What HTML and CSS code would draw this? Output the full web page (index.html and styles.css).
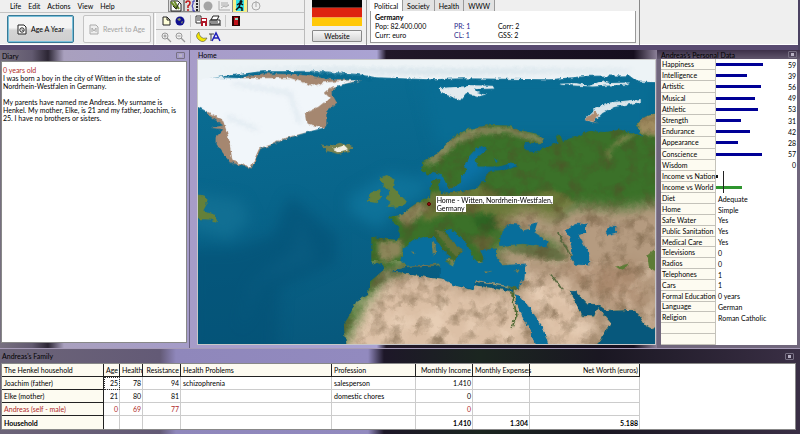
FILE: index.html
```html
<!DOCTYPE html>
<html lang="en">
<head>
<meta charset="utf-8">
<title>Andreas Henkel</title>
<link rel="stylesheet" href="styles.css">
</head>
<body>
<header class="top">
  <div class="left">
    <nav class="menu">
      <button>Life</button><button>Edit</button><button>Actions</button><button>View</button><button>Help</button>
      <span class="icons first">
        <button class="ico on" aria-label="Diary"><svg viewBox="0 0 14 12"><path d="M2 1h7l3 3v7H2z" fill="#fff" stroke="#222"/><path d="M2 2l6 7M5 1l5 8" stroke="#6c8a2c" stroke-width="2"/><path d="M4 6l3 3 3-6" stroke="#222" fill="none"/></svg></button>
        <button class="ico on" aria-label="Help list"><svg viewBox="0 0 14 12"><path d="M1 3q0-2 2-2t2 2-2 3v2M3 9v2" stroke="#c01818" stroke-width="1.500" fill="none"/><path d="M10 1H8v3L7 6l1 2v3h2" stroke="#2222b0" fill="none"/><path d="M12 0v12" stroke="#222" stroke-width="2" stroke-dasharray="2 1"/></svg></button>
        <button class="ico" aria-label="Stop"><svg viewBox="0 0 14 12"><circle cx="7" cy="6" r="4.500" fill="#a4a4a4"/></svg></button>
        <button class="ico" aria-label="Charts"><svg viewBox="0 0 14 12"><path d="M2 1v9h11M4 3h7M4 5h8M4 8l3-2 2 1 3-2" stroke="#aaa" fill="none"/></svg></button>
        <button class="ico on" aria-label="Activities"><svg viewBox="0 0 14 12"><path d="M0 0h14v12H0z" fill="#f6f08a"/><path d="M3 0h8v11H3z" fill="#31e0e8"/><circle cx="8" cy="1.500" r="1.500" fill="#111"/><path d="M7.500 3L6 7l3 1v3M6 7l-3 3M4 5l3-2 3 2" stroke="#111" stroke-width="1.500" fill="none"/></svg></button>
        <button class="ico" aria-label="Clock"><svg viewBox="0 0 14 12"><circle cx="7" cy="6" r="4" fill="none" stroke="#aaa"/><path d="M7 1v6" stroke="#aaa"/></svg></button>
      </span>
    </nav>
    <div class="tools">
      <div class="age">
        <button class="big focus"><svg viewBox="0 0 10 11"><path d="M1 1h6l2 2v7H1z" fill="#fff" stroke="#222"/><circle cx="5" cy="6" r="2.200" fill="none" stroke="#222"/><path d="M5 5v1.500h1.500" stroke="#222" stroke-width=".6" fill="none"/></svg>Age A Year</button>
        <button class="big off" disabled><svg viewBox="0 0 10 11"><path d="M1 1h6l2 2v7H1z" fill="#eee" stroke="#aaa"/><path d="M3 8V4l2 3 2-3v4" fill="none" stroke="#aaa"/></svg>Revert to Age</button>
      </div>
      <div class="bars">
        <div class="icons">
          <button class="ico" aria-label="New"><svg viewBox="0 0 14 12"><path d="M4 2h4l3 3v5H4z" fill="#ffffd8" stroke="#222"/><path d="M8 2v3h3" fill="none" stroke="#222"/></svg></button>
          <button class="ico" aria-label="World"><svg viewBox="0 0 14 12"><circle cx="7" cy="6" r="4.500" fill="#101090"/><path d="M4 4l3-1 1 2-2 1zM8 7l2-1-1 3z" fill="#8c9a60"/></svg></button>
          <i></i>
          <button class="ico" aria-label="Save"><svg viewBox="0 0 14 12"><path d="M2 1h5v7H2z" fill="#fff" stroke="#333"/><path d="M3 3h3M3 5h3" stroke="#333"/><path d="M7 3h6v8H7z" fill="#b01828"/><path d="M9 8h2v3H9zM8 4h4v2H8z" fill="#fff"/></svg></button>
          <button class="ico" aria-label="Print"><svg viewBox="0 0 14 12"><path d="M5 1h6L9 5H3zM2 5h10v4H2z" fill="#fff" stroke="#222"/><path d="M1 10h12M3 7h7" stroke="#222"/></svg></button>
          <i></i>
          <button class="ico" aria-label="Exit"><svg viewBox="0 0 14 12"><path d="M3 1h8v10H3z" fill="#2a0505"/><path d="M5 2h4v8H5z" fill="#c01018"/><path d="M6 3h3v2H6z" fill="#9ad8c0"/></svg></button>
        </div>
        <div class="icons">
          <button class="ico" aria-label="Zoom in"><svg viewBox="0 0 14 12"><circle cx="6" cy="5" r="3" fill="none" stroke="#999"/><path d="M4.500 5h3M6 3.500v3M8 7l4 4" stroke="#999" stroke-width="1.200"/></svg></button>
          <button class="ico" aria-label="Zoom out"><svg viewBox="0 0 14 12"><circle cx="6" cy="5" r="3" fill="none" stroke="#999"/><path d="M4.500 5h3M8 7l4 4" stroke="#999" stroke-width="1.200"/></svg></button>
          <i></i>
          <button class="ico" aria-label="Night"><svg viewBox="0 0 14 12"><path d="M5 1q-5 4 0 8t8-2q-4 1-6-1T5 1" fill="#f2e600" stroke="#554" stroke-width=".6"/></svg></button>
          <button class="ico" aria-label="Font"><svg viewBox="0 0 14 12"><path d="M1 3h5M3 3v7" stroke="#444" fill="none"/><path d="M4 10L8 2l4 8M6 7h5" stroke="#2020b8" stroke-width="1.500" fill="none"/></svg></button>
        </div>
      </div>
    </div>
  </div>
  <div class="country">
    <svg class="flag" viewBox="0 0 49 27" preserveAspectRatio="none" role="img" aria-label="Flag of Germany"><path d="M0 0h49v8H0z" fill="#000"/><path d="M0 8h49v10H0z" fill="#de2410"/><path d="M0 18h49v9H0z" fill="#ffc808"/></svg>
    <button class="web">Website</button>
  </div>
  <section class="info">
    <div class="tabs" role="tablist"><button role="tab" class="sel">Political</button><button role="tab">Society</button><button role="tab">Health</button><button role="tab">WWW</button></div>
    <div class="facts">
      <b>Germany</b><span></span><span></span>
      <span>Pop: 82.400.000</span><a href="#pr">PR: 1</a><span>Corr: 2</span>
      <span>Curr: euro</span><a href="#cl">CL: 1</a><span>GSS: 2</span>
    </div>
  </section>
</header>

<main class="mid">
  <section class="win diary">
    <h2>Diary<button class="x" aria-label="Close diary"></button></h2>
    <div class="pane text">
      <p class="red">0 years old</p>
      <p>I was born a boy in the city of Witten in the state of Nordrhein-Westfalen in Germany.</p>
      <p class="gap">My parents have named me Andreas. My surname is Henkel. My mother, Elke, is 21 and my father, Joachim, is 25. I have no brothers or sisters.</p>
    </div>
  </section>

  <section class="win home">
    <h2>Home</h2>
    <div class="pane map">
      <svg viewBox="24 30 1374 858" preserveAspectRatio="none" role="img" aria-label="Map of Europe">
        <defs>
          <filter id="rough" filterUnits="userSpaceOnUse" x="-40" y="-40" width="1500" height="1000" color-interpolation-filters="sRGB"><feTurbulence type="fractalNoise" baseFrequency=".07" numOctaves="2" seed="4"/><feDisplacementMap in="SourceGraphic" scale="13" xChannelSelector="R" yChannelSelector="G"/></filter>
          <filter id="blur" x="-20%" y="-20%" width="140%" height="140%" color-interpolation-filters="sRGB"><feGaussianBlur stdDeviation="20"/></filter>
          <filter id="soft" x="-20%" y="-20%" width="140%" height="140%" color-interpolation-filters="sRGB"><feGaussianBlur stdDeviation="7"/></filter>
          <filter id="grain" x="0" y="0" width="100%" height="100%" color-interpolation-filters="sRGB"><feTurbulence type="fractalNoise" baseFrequency=".022" numOctaves="5" seed="9"/><feColorMatrix values="0 0 0 0 .35  0 0 0 0 .27  0 0 0 0 .16  1.800 1.200 0 0 -1.400"/></filter>
          <filter id="light" x="0" y="0" width="100%" height="100%" color-interpolation-filters="sRGB"><feTurbulence type="fractalNoise" baseFrequency=".014" numOctaves="4" seed="21"/><feColorMatrix values="0 0 0 0 .95  0 0 0 0 .86  0 0 0 0 .77  2 1 0 0 -1.250"/></filter>
          <clipPath id="land"><path d="M545 565L620 573L632 555L625 530L595 505L640 497L655 480L700 450L722 443L725 395L750 390L745 415L755 432L800 428L862 420L875 400L890 398L888 375L905 365L945 362L985 352L970 340L930 352L865 352L858 330L875 315L895 298L880 288L862 295L838 322L826 345L832 365L815 380L815 400L785 418L773 410L757 375L730 368L715 380L698 365L697 338L745 312L770 285L800 255L840 238L900 226L955 228L985 240L1040 252L1068 268L1060 282L1005 280L1010 305L1045 310L1060 295L1105 280L1100 258L1115 260L1120 275L1160 262L1200 245L1250 248L1290 240L1345 252L1360 262L1340 225L1360 205L1398 192H1450V830L1385 840L1368 830L1350 800L1335 785L1255 788L1225 768L1195 765L1160 728L1140 727L1165 775L1175 803L1215 805L1225 778L1265 825L1225 888V930H1085L1068 860L1010 770L980 745L975 730L965 718L870 702L850 705L850 725L800 712L760 690L750 650L650 655L605 668L582 665L576 642L570 650L545 640ZM582 665L540 700L535 740L500 760L480 800L462 830L470 888V930H1055L1040 888L1010 820L980 760L975 730Z"/></clipPath>
          <linearGradient id="sea" x2=".2" y2="1"><stop stop-color="#0b7096"/><stop offset=".5" stop-color="#08658b"/><stop offset="1" stop-color="#07587c"/></linearGradient>
        </defs>
        <path d="M0 0H1440V920H0z" fill="url(#sea)"/>
        <g filter="url(#blur)">
          <path d="M0 430L150 450L180 510L120 570L0 540z" fill="#116f93"/>
          <path d="M480 440L600 370L700 390L720 430L600 500L570 540L480 490z" fill="#0e7299"/>
          <path d="M330 490L380 640L210 700L150 850L190 700L310 600z" fill="#126c91"/>
          <path d="M0 600L130 600L250 560L300 440L440 560L440 640L270 720L260 930H0z" fill="#045075" opacity=".6"/>
          <path d="M690 80H1398V260H900L740 290z" fill="#096d94"/>
          <path d="M700 380L850 280L920 340L800 430z" fill="#0c73a6"/>
        </g>
        <g filter="url(#rough)">
          <path d="M0 88L150 85L205 70L330 73L420 88L515 92L440 108L425 130L442 160L410 185L410 230L290 268L240 290L212 298L185 358L120 340L80 285L80 260L100 240L65 235L100 228L60 200L45 180L0 160z" fill="#a58770"/>
          <path d="M0 80L150 85L300 84L370 108L400 98L515 90L425 112L405 130L420 145L385 172L345 190L350 222L402 235L290 265L240 287L208 297L182 354L128 335L115 260L100 215L60 190L0 160z" fill="#f1f6fa"/>
          <path d="M130 100L300 130L330 220M110 200L200 240" stroke="#dbe6ee" stroke-width="8" fill="none" filter="url(#soft)"/>
          <path d="M0 0H1440V98L1345 95L1320 76L1200 78L1080 88L820 85L720 88L560 82L500 72L380 62L200 66L0 92z" fill="#edf3f6"/>
          <path d="M90 60L370 52L1330 58L1310 66L700 76L340 62z" fill="#cfdfe7" opacity=".6" filter="url(#soft)"/>
          <path d="M170 72L220 64L330 66L430 74L560 84L540 92L480 88L400 80L300 72L220 70L190 78z" fill="#086a90"/>
          <path d="M392 285L420 290L450 280L490 290L480 305L445 314L410 305z" fill="#75804f"/>
          <path d="M430 298L465 288L475 300L445 308z" fill="#f1eee3"/>
          <path d="M0 432L48 440L50 465L40 485L75 495L82 520L60 512L0 510zM570 385L592 378L615 390L610 415L635 440L652 458L635 472L590 474L605 460L590 450L602 430L585 415zM540 432L572 420L575 445L560 462L535 458z" fill="#64803a"/>
          <path d="M750 115L850 108L860 125L890 135L870 140L830 130L812 152L790 142L755 130zM835 106L910 108L915 116L860 118zM1112 102L1160 100L1200 108L1240 92L1260 100L1320 98L1310 104L1210 110L1120 105z" fill="#e2eaee"/>
          <path d="M1185 210L1220 175L1265 158L1355 148L1355 157L1275 172L1240 190L1212 218z" fill="#d9e5ea"/>
          <path d="M1185 210L1215 185L1230 195L1215 215L1230 222z" fill="#b08c70"/>
          <g clip-path="url(#land)">
            <path d="M440 180H1450V930H440z" fill="#3b7129"/>
            <g filter="url(#soft)">
              <path d="M700 350L760 280L850 232L960 232L1080 268L1070 285L950 250L870 255L800 285L740 340z" fill="#868a5c"/>
              <path d="M715 435L860 405L960 450L1090 420L1160 460L1090 520L920 540L880 490L770 495L700 520z" fill="#6a7939"/>
              <path d="M620 500L690 455L720 480L650 535zM565 580L640 575L635 620L590 640L565 625z" fill="#8c865a"/>
              <path d="M735 540L830 600L800 620zM840 570L920 560L885 620z" fill="#636f38"/>
              <path d="M1300 260L1345 250L1265 300L1260 340L1250 310z" fill="#878752"/>
              <path d="M1330 190H1450V270L1350 250z" fill="#a08c60"/>
              <path d="M850 510L910 490L925 540L880 550z" fill="#2e6323"/>
            </g>
            <g filter="url(#blur)">
              <path d="M1480 450L1300 480L1160 470L1090 515L1020 480L930 520L960 545L1100 580L1130 620L930 590L910 640L980 670L985 710L700 640L590 675L430 940H1480z" fill="#b59b80"/>
              <path d="M540 740L700 690L840 735L960 725L1040 940H440zM990 690L1130 700L1200 820L1200 940H1080z" fill="#dcc0a6"/>
              <path d="M1080 620L1180 660L1340 640L1370 780L1270 775L1160 700z" fill="#aa8a6e"/>
            </g>
            <path d="M575 665L720 645L755 655L700 662L600 690L550 720L560 690zM950 600L1080 590L1140 625L1110 640L980 610z" fill="#667044" filter="url(#soft)"/>
            <path d="M440 640H1450V930H440z" filter="url(#light)" opacity=".5"/>
            <path d="M440 180H1450V930H440z" filter="url(#grain)" opacity=".5"/>
            <path d="M955 714L992 714L975 730L974 760L985 800L970 840L966 838L978 800L967 745z" fill="#4c6830"/>
            <path d="M1280 655L1320 645L1300 667zM1375 620L1398 600V670L1380 660z" fill="#5d7c36"/>
            <path d="M1085 675l20 30 15 20M1105 550l50 90" stroke="#55683c" stroke-width="5" fill="none"/>
          </g>
          <g fill="#086e9b">
            <path d="M935 550L960 525L990 528L1000 545L1020 540L1018 528L1045 520L1035 550L1075 578L1072 597L1000 585L930 592z"/>
            <path d="M1130 540L1160 525L1192 525L1190 550L1168 560L1185 590L1200 610L1200 650L1160 648L1145 630L1150 590z"/>
            <path d="M1250 545L1262 530L1282 532L1280 555L1255 562z"/>
            <path d="M640 600L668 575L705 565L735 565L760 605L785 625L770 640L790 650L800 630L820 605L790 580L765 545L785 540L830 580L850 625L870 645L885 630L875 605L920 600L920 625L940 650L1010 645L1005 690L985 718L860 695L850 722L800 712L750 688L752 645L650 652L635 635z"/>
            <path d="M955 338l25 5-20 15zM915 325l12 8-8 10z"/>
            <path d="M976 738L990 742L1022 780L1060 835L1080 900L1040 900L1020 840L992 790z"/>
          </g>
          <path d="M730 620L727 580L738 585L740 612zM770 630L797 635L790 645zM972 668L992 662L985 673zM880 665L910 668L890 672zM665 608l12 3-5 5z" fill="#7c8050"/>
          <path d="M735 543L760 548L785 580L825 605L810 610L800 625L780 600z" fill="#607037"/>
        </g>
      </svg>
      <span class="pin"></span>
      <span class="tip"><span>Home - Witten, Nordrhein-Westfalen, Germany</span></span>
    </div>
  </section>

  <section class="win person">
    <h2>Andreas's Personal Data<button class="x" aria-label="Close personal data"></button></h2>
    <div class="pane stats">
      <table class="meters">
        <tr><th>Happiness</th><td><div><i style="width:59%"></i>59</div></td></tr>
        <tr><th>Intelligence</th><td><div><i style="width:39%"></i>39</div></td></tr>
        <tr><th>Artistic</th><td><div><i style="width:56%"></i>56</div></td></tr>
        <tr><th>Musical</th><td><div><i style="width:49%"></i>49</div></td></tr>
        <tr><th>Athletic</th><td><div><i style="width:53%"></i>53</div></td></tr>
        <tr><th>Strength</th><td><div><i style="width:31%"></i>31</div></td></tr>
        <tr><th>Endurance</th><td><div><i style="width:42%"></i>42</div></td></tr>
        <tr><th>Appearance</th><td><div><i style="width:28%"></i>28</div></td></tr>
        <tr><th>Conscience</th><td><div><i style="width:57%"></i>57</div></td></tr>
        <tr><th>Wisdom</th><td><div><i style="width:0%"></i>0</div></td></tr>
        <tr><th>Income vs Nation</th><td class="mark"><div><i class="dark" style="width:3%"></i></div></td></tr>
        <tr><th>Income vs World</th><td class="mark"><div><i class="green" style="width:32%"></i></div></td></tr>
      </table>
      <table class="details">
        <tr><th>Diet</th><td>Adequate</td></tr>
        <tr><th>Home</th><td>Simple</td></tr>
        <tr><th>Safe Water</th><td>Yes</td></tr>
        <tr><th>Public Sanitation</th><td>Yes</td></tr>
        <tr><th>Medical Care</th><td>Yes</td></tr>
        <tr><th>Televisions</th><td>0</td></tr>
        <tr><th>Radios</th><td>0</td></tr>
        <tr><th>Telephones</th><td>1</td></tr>
        <tr><th>Cars</th><td>1</td></tr>
        <tr><th>Formal Education</th><td>0 years</td></tr>
        <tr><th>Language</th><td>German</td></tr>
        <tr><th>Religion</th><td>Roman Catholic</td></tr>
        <tr><th></th><td></td></tr>
        <tr><th></th><td></td></tr>
      </table>
    </div>
  </section>
</main>

<section class="win family">
  <h2>Andreas's Family<button class="x" aria-label="Close family"></button></h2>
  <div class="pane">
    <table class="fam">
      <colgroup><col class="c1"><col class="c2"><col class="c3"><col class="c4"><col class="c5"><col class="c6"><col class="c7"><col class="c7"><col class="c8"></colgroup>
      <thead><tr><th>The Henkel household</th><th class="n">Age</th><th class="n">Health</th><th class="n">Resistance</th><th>Health Problems</th><th>Profession</th><th class="n">Monthly Income</th><th class="n">Monthly Expenses</th><th class="n">Net Worth (euros)</th></tr></thead>
      <tbody>
        <tr><th>Joachim (father)</th><td class="n cur">25</td><td class="n">78</td><td class="n">94</td><td>schizophrenia</td><td>salesperson</td><td class="n">1.410</td><td></td><td></td></tr>
        <tr><th>Elke (mother)</th><td class="n">21</td><td class="n">80</td><td class="n">81</td><td></td><td>domestic chores</td><td class="n">0</td><td></td><td></td></tr>
        <tr class="red"><th>Andreas (self - male)</th><td class="n">0</td><td class="n">69</td><td class="n">77</td><td></td><td></td><td class="n">0</td><td></td><td></td></tr>
        <tr class="total"><th>Household</th><td></td><td></td><td></td><td></td><td></td><td class="n">1.410</td><td class="n">1.304</td><td class="n">5.188</td></tr>
      </tbody>
    </table>
  </div>
</section>
</body>
</html>
```
FILE: styles.css
```css
* { box-sizing: border-box; }
body {
  margin: 0;
  min-height: 100vh;
  display: flex;
  flex-direction: column;
  font: 7px/8px Lato, Roboto, sans-serif;
  color: #000;
  background: #4b4262;
}
button { font: inherit; color: inherit; padding: 0; margin: 0; border: 0; background: none; }
h2, p { margin: 0; font-size: inherit; font-weight: normal; }
table { border-collapse: separate; border-spacing: 0; table-layout: fixed; width: 100%; }
th, td { padding: 0; font-weight: normal; text-align: left; white-space: nowrap; }
.red { color: #b02a2a; }

/* toolbar */
.top {
  display: flex;
  height: 50px;
  margin-right: 2px;
  background: #efefef;
  border-bottom: 5px solid #584a70;
  box-shadow: inset 0 -1px #fff, 0 -1px #aaa0c0;
}
.left { flex: 0 0 305px; display: flex; flex-direction: column; border-right: 1px solid #bbb; }
.menu { display: flex; height: 13px; padding-left: 10px; gap: 7px; border-bottom: 1px solid #c4c4c4; }
.menu > button { height: 12px; }
.icons { display: flex; align-items: center; }
.first { margin-left: auto; padding-right: 40px; align-items: stretch; }
.ico { width: 14px; height: 12px; display: block; }
.ico svg { display: block; width: 14px; height: 12px; }
.first .ico { width: 16px; padding: 0 1px; }
.first .on { background: #ddd; border: solid #888; border-width: 0 1px 1px; padding: 0; }
.tools { flex: 1; display: flex; }
.age { flex: 0 0 153px; display: flex; gap: 9px; padding: 2px 2px 2px 7px; border-right: 1px solid #bbb; }
.big { display: flex; align-items: center; justify-content: center; gap: 4px; border-radius: 2px; }
.big svg { width: 10px; height: 11px; }
.focus { width: 67px; border: 1px solid #387a96; box-shadow: inset 0 0 0 1px #78bfda; background: linear-gradient(#f4f4f4 45%, #d4d4d4 55%, #cfcfcf); }
.off { width: 68px; border: 1px solid #c4c4c4; background: #f5f5f5; color: #a2a2a2; }
.bars { flex: 1; display: flex; flex-direction: column; margin-left: 1px; border-left: 1px solid #fff; }
.bars .icons { flex: 1; padding-left: 3px; }
.bars .icons + .icons { border-top: 1px solid #bbb; }
.bars i { width: 1px; height: 12px; margin: 0 3px; background: #c8c8c8; }
.country { flex: 0 0 62px; display: flex; flex-direction: column; gap: 4px; padding: 0 4px 3px 7px; border-right: 1px solid #999; }
.flag { width: 100%; height: 27px; display: block; }
.web { height: 12px; border: 1px solid #888; border-radius: 1px; background: linear-gradient(#f6f6f6, #d6d6d6); }
.info { flex: 0 0 273px; display: flex; flex-direction: column; padding: 0 3px 2px; border-right: 1px solid #888; }
.tabs { display: flex; height: 11px; }
.tabs button { padding: 0 4px; background: #e2e2e2; border: solid #999; border-width: 0 1px 0 0; }
.tabs .sel { background: #fff; }
.facts {
  flex: 1;
  display: grid;
  grid-template-columns: 79px 44px 1fr;
  grid-auto-rows: 9px;
  padding: 2px 4px;
  background: #fff;
  border: solid #999;
  border-width: 0 1px 1px;
}
.facts a { color: #28288c; text-decoration: none; }

/* windows */
.mid {
  flex: 1;
  display: grid;
  grid-template-columns: 190px 1fr 143px;
  background: linear-gradient(90deg, #777080, #625a70 4%, #2c2634 6%, #a9a0be 8%, #a59cc8 22%, #aaa3d3 47%, #211828 49%, #160e1e 80%, #40354c);
}
.win { display: flex; flex-direction: column; min-width: 0; }
.win h2 { display: flex; justify-content: space-between; align-items: center; padding: 0 2px 0 1px; white-space: nowrap; }
.x { width: 9px; height: 7px; border: 1px solid #777083; border-radius: 1px; display: grid; place-items: center; }
.x::before { content: ""; width: 3px; height: 3px; background: #b8b2c4; }
.pane { flex: 1; background: #fff; }
.diary { padding: 0 2px 5px 1px; border-right: 1px solid #686080; }
.diary h2 { height: 11px; }
.text { padding: 4px 1px; border: 1px solid #888; }
.gap { margin-top: 8px; }
.home { padding: 0 1px 3px 7px; background: linear-gradient(90deg, #a79cc8, #aaa3d3 40%, #211828 42%, #160e1e 95%, #8c8098); }
.home h2 { height: 9px; }
.map { position: relative; border: 1px solid #c8c8c8; overflow: hidden; }
.map > svg { position: absolute; inset: 0; width: 100%; height: 100%; }
.pin { position: absolute; left: 50%; top: 50%; width: 4px; height: 4px; border-radius: 50%; background: #a01010; border: 1px solid #500; }
.tip { position: absolute; left: 52%; top: 48%; width: 120px; }
.tip span { background: #fff; padding: 0 1px; -webkit-box-decoration-break: clone; box-decoration-break: clone; }
.person { padding: 0 3px 3px 4px; background: #70667c; }
.person h2 { height: 9px; margin: 0 -3px 0 -4px; padding: 0 3px 0 4px; background: linear-gradient(#3c3048, #60566c); }
.stats { display: flex; flex-direction: column; }
.stats th { width: 55px; height: 10px; padding-left: 1px; background: #fdfbf1; border: solid #c4c2ba; border-width: 0 1px 1px 0; }
.stats td { padding-left: 2px; }
.meters { height: 47%; }
.details { height: 53%; }
.meters td { padding: 0; position: relative; }
.meters td div { display: flex; align-items: center; justify-content: space-between; padding-right: 1px; }
.meters i { flex: none; height: 3px; background: #000096; }
.meters .green { background: #2f952f; }
.meters .dark { background: #111; }
.mark::after { content: ""; position: absolute; left: 7px; top: 0; bottom: 0; width: 1px; background: #222; }

/* family */
.family {
  padding: 0 4px 4px 1px;
  border-top: 1px solid #a79cb8;
  background: linear-gradient(90deg, #6c6478, #635a76 20%, #8f87bb 22%, #928abf 46%, #1d1728 48%, #1b2620 60%, #1a1722 75%, #3a2f45);
}
.family h2 { height: 14px; }
.family .pane { border: 1px solid #888; }
.fam { width: 638px; max-width: 100%; }
.c1 { width: 102px; } .c2 { width: 16px; } .c3 { width: 23px; } .c4 { width: 38px; }
.c5 { width: 151px; } .c6 { width: 84px; } .c7 { width: 57px; }
.fam th, .fam td { height: 13px; padding: 0 1px 0 2px; border: solid #ccc; border-width: 0 1px 1px 0; }
.fam th { background: #fdfbf1; border-color: #222; }
.fam .n { text-align: right; }
.fam td.cur { outline: 1px dotted #333; outline-offset: -1px; }
.fam .total > * { font-weight: bold; border-bottom: 0; }
```
